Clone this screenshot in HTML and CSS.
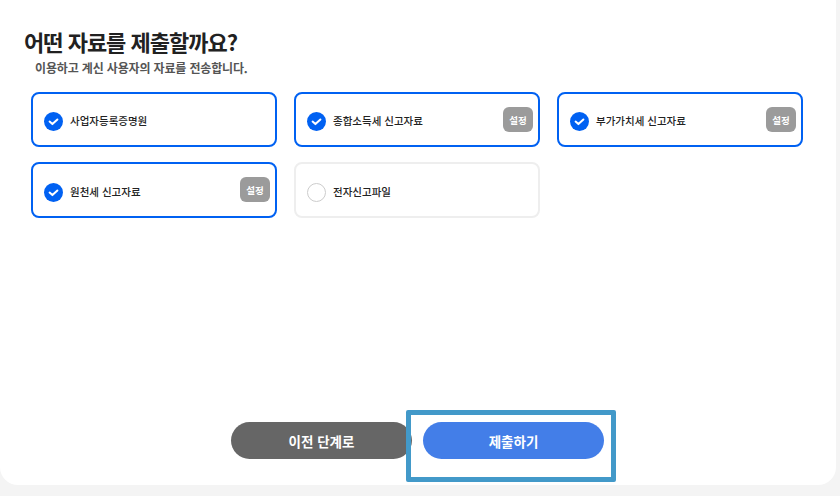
FILE: index.html
```html
<!doctype html>
<html lang="ko">
<head>
	<meta charset="utf-8">
	<title>자료 제출</title>
	<link rel="stylesheet" href="styles.css">
</head>
<body>

<div class="panel">
	<h1 class="title">어떤 자료를 제출할까요?</h1>
	<p class="subtitle">이용하고 계신 사용자의 자료를 전송합니다.</p>

	<div class="doc-grid">
		<div class="doc-card selected">
			<svg class="check" viewBox="0 0 19 19"><circle cx="9.5" cy="9.5" r="9.5" fill="#0061f2"/><path d="M5.6 9.6l2.8 2.5 5-4.6" fill="none" stroke="#fff" stroke-width="2" stroke-linecap="round" stroke-linejoin="round"/></svg>
			<span class="doc-name">사업자등록증명원</span>
		</div>
		<div class="doc-card selected">
			<svg class="check" viewBox="0 0 19 19"><circle cx="9.5" cy="9.5" r="9.5" fill="#0061f2"/><path d="M5.6 9.6l2.8 2.5 5-4.6" fill="none" stroke="#fff" stroke-width="2" stroke-linecap="round" stroke-linejoin="round"/></svg>
			<span class="doc-name">종합소득세 신고자료</span>
			<button class="setting">설정</button>
		</div>
		<div class="doc-card selected">
			<svg class="check" viewBox="0 0 19 19"><circle cx="9.5" cy="9.5" r="9.5" fill="#0061f2"/><path d="M5.6 9.6l2.8 2.5 5-4.6" fill="none" stroke="#fff" stroke-width="2" stroke-linecap="round" stroke-linejoin="round"/></svg>
			<span class="doc-name">부가가치세 신고자료</span>
			<button class="setting">설정</button>
		</div>
		<div class="doc-card selected">
			<svg class="check" viewBox="0 0 19 19"><circle cx="9.5" cy="9.5" r="9.5" fill="#0061f2"/><path d="M5.6 9.6l2.8 2.5 5-4.6" fill="none" stroke="#fff" stroke-width="2" stroke-linecap="round" stroke-linejoin="round"/></svg>
			<span class="doc-name">원천세 신고자료</span>
			<button class="setting">설정</button>
		</div>
		<div class="doc-card">
			<svg class="check" viewBox="0 0 19 19"><circle cx="9.5" cy="9.5" r="9" fill="#fff" stroke="#ccc"/></svg>
			<span class="doc-name">전자신고파일</span>
		</div>
	</div>

	<div class="actions">
		<button class="btn btn-prev">이전 단계로</button>
		<div class="submit-wrap">
			<button class="btn btn-submit">제출하기</button>
			<div class="highlight"></div>
		</div>
	</div>
</div>

</body>
</html>
```

FILE: styles.css
```css
html, body {
    margin: 0;
    height: 100%;
}

body {
    background: #f4f4f4;
    font-family: "Noto Sans CJK KR", "Noto Sans", sans-serif;
    overflow: hidden;
}

.panel {
    display: flex;
    flex-direction: column;
    box-sizing: border-box;
    width: 836px;
    height: 485px;
    padding: 26px 0 26px 0;
    background: #fff;
    border-radius: 0 0 18px 18px;
}

.title {
    margin: 0 0 0 24px;
    font-size: 22px;
    line-height: 30px;
    font-weight: 700;
    letter-spacing: -1px;
    color: #212121;
}

.subtitle {
    margin: 3px 0 0 35px;
    font-size: 12px;
    line-height: 18px;
    font-weight: 700;
    letter-spacing: -0.15px;
    color: #555;
}

.doc-grid {
    display: grid;
    grid-template-columns: repeat(3, 245.5px);
    grid-template-rows: 55px 56px;
    column-gap: 17.5px;
    row-gap: 15px;
    margin: 15px 0 0 31px;
}

.doc-card {
    display: flex;
    align-items: center;
    position: relative;
    box-sizing: border-box;
    padding: 4px 11px 0 11px;
    border: 2px solid #eee;
    border-radius: 8px;
    background: #fff;
}

.doc-card.selected {
    border-color: #0061f2;
}

.check {
    flex: none;
    width: 19px;
    height: 19px;
    margin-right: 7px;
}

.doc-name {
    font-size: 10.5px;
    font-weight: 500;
    margin-top: -2px;
    color: #222;
}

.setting {
    position: absolute;
    top: 13px;
    right: 4.5px;
    width: 30px;
    height: 25px;
    padding: 0;
    border: none;
    border-radius: 6px;
    background: #9b9b9b;
    color: #fff;
    font-family: inherit;
    font-size: 9.5px;
    font-weight: 700;
}

.actions {
    display: flex;
    justify-content: center;
    gap: 11px;
    margin-top: auto;
    padding-right: 1px;
}

.btn {
    width: 181px;
    height: 37px;
    padding: 0;
    border: none;
    border-radius: 19px;
    color: #fff;
    font-family: inherit;
    font-size: 13.5px;
    font-weight: 700;
}

.btn-prev {
    background: #666;
}

.btn-submit {
    display: block;
    background: #437ee8;
}

.submit-wrap {
    position: relative;
}

.highlight {
    position: absolute;
    top: -12px;
    left: -17px;
    width: 200px;
    height: 62px;
    border: 5px solid #4299c9;
    border-radius: 2px;
}
```
